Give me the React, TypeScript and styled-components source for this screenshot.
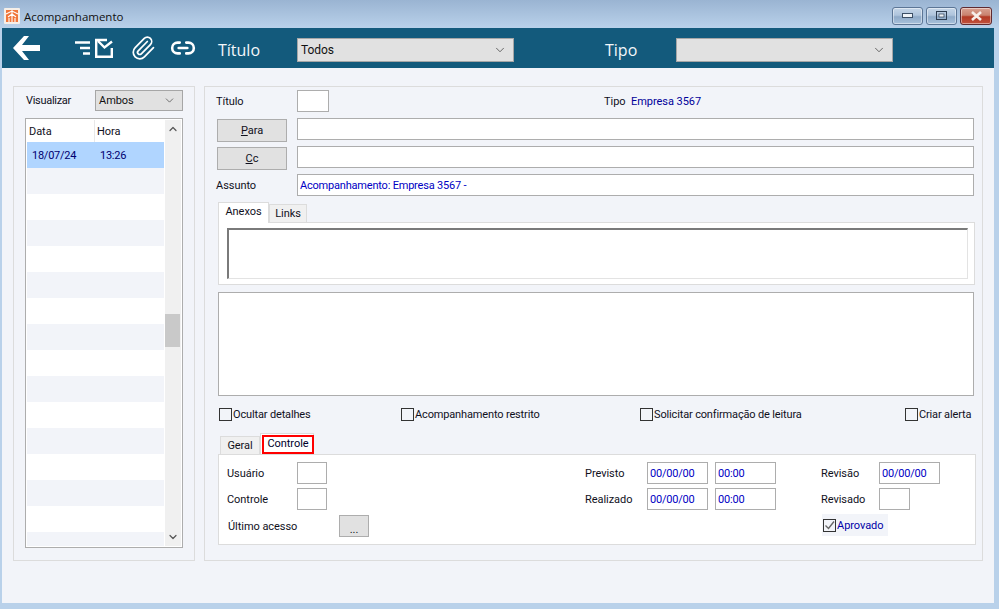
import React from "react";
import styled, { createGlobalStyle } from "styled-components";
import { Paperclip, Link2, ChevronDown, ChevronUp } from "lucide-react";

const Global = createGlobalStyle`
  html, body { margin: 0; padding: 0; background: #b9d1ea; }
  * { box-sizing: border-box; }
  body { font-family: "Roboto", "Liberation Sans", sans-serif; font-size: 11px; color: #10101c; letter-spacing: -0.05px; }
`;

const Window = styled.div`
  width: 999px; height: 609px; overflow: hidden;
  display: flex; flex-direction: column;
  background: #b9d1ea;
`;
const TitleBar = styled.div`
  height: 28px; flex: none; display: flex; align-items: center; padding: 4px 7px 0 4px;
  background: linear-gradient(#9ab4d2, #b9d1ea);
`;
const AppIcon = styled.svg`width: 16px; height: 16px; margin-right: 4px; flex: none;`;
const TitleText = styled.span`font-family: "Open Sans", sans-serif; font-size: 11.5px; letter-spacing: 0; color: #111; flex: 1;`;
const WinBtn = styled.div<{ $close?: boolean }>`
  width: ${p => (p.$close ? 32 : 31)}px; height: 18px; margin-left: 3px; display: flex; align-items: center; justify-content: center;
  border: 1px solid ${p => (p.$close ? "#5f2a30" : "#5c7696")}; border-radius: 3px;
  background: ${p => p.$close ? "linear-gradient(#d9a192 0%, #c9826f 45%, #b33a25 55%, #c0513d 100%)" : "linear-gradient(#c5d6e8 0%, #aec4dc 45%, #8faac8 55%, #a8c2dc 100%)"};
  box-shadow: inset 0 0 0 1px rgba(255,255,255,.45);
`;
const Client = styled.div`
  flex: 1; margin: 0 5px 6px 2px; background: #f2f4f9; display: flex; flex-direction: column; min-height: 0;
`;
const Toolbar = styled.div`
  height: 40px; flex: none; background: #135a7c; display: flex; align-items: center; color: #fff;
`;
const IconSlot = styled.div<{ $w: number; $l: number }>`
  width: ${p => p.$w}px; margin-left: ${p => p.$l}px; display: flex; align-items: center; justify-content: center; flex: none;
`;
const ToolLabel = styled.span<{ $w: number; $l: number }>`
  width: ${p => p.$w}px; margin: 3px 0 0 ${p => p.$l}px; flex: none;
  font-family: "Open Sans", sans-serif; font-size: 16px; letter-spacing: 0; color: #f4f7fa;
`;
const Select = styled.div<{ $w: number; $h: number; $size?: number; $drop?: number }>`
  width: ${p => p.$w}px; height: ${p => p.$h}px; flex: none; margin-top: ${p => p.$drop ?? 0}px;
  background: #e1e1e1; border: 1px solid #a6a6a6; color: #111;
  display: flex; align-items: center; justify-content: space-between;
  padding: 0 6px 0 3px; font-size: ${p => p.$size ?? 11}px;
`;
const Main = styled.div`
  flex: 1; min-height: 0; display: grid; grid-template-columns: 182px 779px; column-gap: 9px;
  padding: 18px 0 42px 11px;
`;
const Panel = styled.div`
  border: 1px solid #dcdcdc; min-height: 0; display: flex; flex-direction: column;
`;
const LeftPanel = styled(Panel)`padding: 3px 11px 12px 11px;`;
const RightPanel = styled(Panel)`padding: 3px 8px 0 11px;`;
const ViewRow = styled.div`display: flex; align-items: center; height: 21px; flex: none;`;
const ViewLabel = styled.span`width: 70px; flex: none; padding-left: 1px; color: #10101c; letter-spacing: -0.3px;`;
const ListBox = styled.div`
  margin-top: 7px; flex: 1; min-height: 0; border: 1px solid #adadad; background: #fff; padding: 1px;
  display: flex; gap: 1px;
`;
const ListCol = styled.div`flex: 1; min-width: 0; display: flex; flex-direction: column; overflow: hidden;`;
const ListHead = styled.div`height: 22px; flex: none; display: flex; align-items: center; background: #fff;`;
const HeadCell = styled.span<{ $w: number }>`
  width: ${p => p.$w}px; height: 100%; padding-left: 2px; display: flex; align-items: center; color: #10101c;
  &:first-child { border-right: 1px solid #e8e8e8; }
`;
const ListRow = styled.div<{ $kind: "sel" | "odd" | "even" }>`
  height: 26px; flex: none; display: flex; align-items: center; color: #000070; letter-spacing: -0.25px;
  background: ${p => (p.$kind === "sel" ? "#b0d5ff" : p.$kind === "odd" ? "#f2f4f9" : "#fff")};
`;
const Cell = styled.span<{ $w: number; $pl: number }>`width: ${p => p.$w}px; padding-left: ${p => p.$pl}px;`;
const ScrollBar = styled.div`
  width: 16px; flex: none; background: #f0f0f0; display: flex; flex-direction: column; align-items: center; color: #555;
`;
const Arrow = styled.div<{ $end?: boolean }>`
  height: 18px; flex: none; display: flex; align-items: center; justify-content: center; margin-top: ${p => (p.$end ? "auto" : "0")};
`;
const Thumb = styled.div`width: 15px; height: 33px; margin-top: 176px; background: #c9c9c9; flex: none; align-self: flex-start;`;

const Row = styled.div<{ $top?: number }>`
  display: flex; align-items: flex-start; flex: none; margin-top: ${p => p.$top ?? 0}px;
`;
const CenterRow = styled(Row)`align-items: center;`;
const LabelBox = styled.span<{ $w: number }>`width: ${p => p.$w}px; flex: none; color: #10101c;`;
const Input = styled.div<{ $w: number; $h?: number }>`
  width: ${p => p.$w}px; height: ${p => p.$h ?? 22}px; flex: none; background: #fff; border: 1px solid #adadad;
  display: flex; align-items: center; padding-left: 2px; color: #0000c4; white-space: nowrap; letter-spacing: -0.2px;
`;
const PushBtn = styled.div<{ $w: number }>`
  width: ${p => p.$w}px; height: 23px; flex: none; background: #e1e1e1; border: 1px solid #adadad;
  display: flex; align-items: center; justify-content: center; color: #10101c;
`;
const BtnCol = styled.div`width: 81px; flex: none; padding: 1px 0 0 1px;`;
const Value = styled.span`color: #00009a;`;
const TabStrip = styled.div<{ $l: number; $top: number }>`
  display: flex; align-items: flex-end; margin: ${p => p.$top}px 0 0 ${p => p.$l}px; flex: none; position: relative; z-index: 1;
`;
const Tab = styled.div<{ $active?: boolean; $w: number; $h: number }>`
  width: ${p => p.$w}px; height: ${p => p.$h}px; flex: none; display: flex; align-items: center; justify-content: center;
  border: 1px solid #dcdcdc; border-bottom: none; color: #10101c;
  background: ${p => (p.$active ? "#fff" : "#f0f0f0")};
  margin-bottom: ${p => (p.$active ? "-1px" : "0")};
  padding-bottom: ${p => (p.$active ? 4 : 0)}px;
`;
const RedTab = styled.div`
  width: 54px; height: 21px; flex: none; background: #fff; border: 1px solid #dcdcdc; border-bottom: none; padding: 1px 0 0 1px;
`;
const RedBox = styled.div`
  width: 52px; height: 19px; border: 2px solid #f00; background: #fff; display: flex; align-items: center; justify-content: center; padding-bottom: 3px; color: #00002a;
`;
const AttachPanel = styled.div`
  margin-left: 2px; width: 757px; height: 63px; flex: none; background: #fff; border: 1px solid #dcdcdc; padding: 5px 6px 5px 8px;
`;
const AttachInner = styled.div`
  height: 100%; border: 1px solid #e3e3e3; border-top: 2px solid #7a7a7a; border-left: 2px solid #7a7a7a; background: #fff;
`;
const Memo = styled.div`
  margin: 7px 0 0 2px; width: 756px; height: 104px; flex: none; background: #fff; border: 1px solid #adadad;
`;
const CheckRow = styled.div`
  margin: 12px 0 0 3px; width: 754px; height: 13px; flex: none; display: grid; grid-template-columns: 182px 239px 265px 1fr; align-items: center; letter-spacing: -0.15px;
`;
const CheckLabel = styled.label<{ $shaded?: boolean }>`
  display: flex; align-items: center; white-space: nowrap; color: ${p => (p.$shaded ? "#0000a8" : "#10101c")};
  ${p => p.$shaded ? "background:#f2f4f9; width:66px; height:22px; padding-left:1px; margin-left:1px;" : ""}
`;
const Box = styled.span`
  width: 13px; height: 13px; flex: none; border: 1px solid #333; background: transparent; margin-right: 1px; display: flex;
`;
const CtrlPanel = styled.div`
  margin-left: 2px; width: 758px; height: 91px; flex: none; background: #fff; border: 1px solid #dcdcdc;
  padding: 7px 0 0 8px;
  display: grid; grid-template-columns: 70px 288px 62px 68px 106px 58px 1fr; grid-auto-rows: 22px; row-gap: 4px; align-items: center;
`;
const AccessCell = styled.div`grid-column: 1 / span 2; display: flex; align-items: center; padding-left: 1px; margin-top: 2px;`;
const ApproveCell = styled.div`grid-column: 6 / span 2;`;
const Gap = styled.div<{ $span: number }>`grid-column: span ${p => p.$span};`;
const DotBtn = styled(PushBtn)`height: 22px; align-items: flex-end;`;
const CellLabel = styled.span`color: #10101c;`;

const rows = Array.from({ length: 15 }, (_, i) => i);

function MailListIcon() {
  return (
    <svg width="38" height="22" viewBox="0 0 38 22" fill="none" stroke="#fff" strokeWidth="2.4">
      <path d="M0 5.5h15M5 11h10M8 16.5h7" />
      <path d="M32 3H21.2v16.8h15.6V11" />
      <path d="M23 4l6.5 6.5L37 4.5" />
    </svg>
  );
}

export default function App() {
  return (
    <>
      <Global />
      <Window>
        <TitleBar>
          <AppIcon viewBox="0 0 16 16">
            <rect width="16" height="16" rx="1" fill="#f6efe8" />
            <rect x="2" y="2" width="12" height="12" fill="#f0763a" />
            <path d="M8 2v12M2 6l6-3 6 3M4 9l4-3 4 3M5 14v-4M11 14v-4" stroke="#fff" strokeWidth="1.1" fill="none" />
          </AppIcon>
          <TitleText>Acompanhamento</TitleText>
          <WinBtn>
            <svg width="11" height="6"><rect x=".5" y=".5" width="10" height="4" fill="#eef3f8" stroke="#3c4f66" /></svg>
          </WinBtn>
          <WinBtn>
            <svg width="11" height="10"><rect x=".5" y=".5" width="10" height="8" fill="none" stroke="#2c3c50" /><rect x="3" y="3" width="5" height="3" fill="#eef3f8" stroke="#2c3c50" strokeWidth=".7" /></svg>
          </WinBtn>
          <WinBtn $close>
            <svg width="13" height="10" viewBox="0 0 13 10"><path d="M2 1l9 8M11 1l-9 8" stroke="#f7eeea" strokeWidth="2.6" /></svg>
          </WinBtn>
        </TitleBar>
        <Client>
          <Toolbar>
            <IconSlot $w={28} $l={10}>
              <svg width="28" height="24" viewBox="0 0 28 24" fill="#fff"><path d="M12 0h5l-7 9h18v6H10l7 9h-5L1 12z" /></svg>
            </IconSlot>
            <IconSlot $w={38} $l={35}><MailListIcon /></IconSlot>
            <IconSlot $w={26} $l={17}><Paperclip size={30} color="#fff" strokeWidth={1.6} /></IconSlot>
            <IconSlot $w={26} $l={14}><Link2 size={28} color="#fff" strokeWidth={2.4} /></IconSlot>
            <ToolLabel $w={79} $l={22}>Título</ToolLabel>
            <Select $w={217} $h={24} $size={12} $drop={4}>Todos<ChevronDown size={14} strokeWidth={1.2} color="#333" /></Select>
            <ToolLabel $w={71} $l={91}>Tipo</ToolLabel>
            <Select $w={217} $h={24} $drop={4}><span /><ChevronDown size={14} strokeWidth={1.2} color="#333" /></Select>
          </Toolbar>
          <Main>
            <LeftPanel>
              <ViewRow>
                <ViewLabel>Visualizar</ViewLabel>
                <Select $w={88} $h={21}>Ambos<ChevronDown size={13} strokeWidth={1.2} color="#333" /></Select>
              </ViewRow>
              <ListBox>
                <ListCol>
                  <ListHead>
                    <HeadCell $w={68}>Data</HeadCell>
                    <HeadCell $w={69}>Hora</HeadCell>
                  </ListHead>
                  <ListRow $kind="sel">
                    <Cell $w={68} $pl={5}>18/07/24</Cell>
                    <Cell $w={69} $pl={5}>13:26</Cell>
                  </ListRow>
                  {rows.map(i => <ListRow key={i} $kind={i % 2 === 0 ? "odd" : "even"} />)}
                </ListCol>
                <ScrollBar>
                  <Arrow><ChevronUp size={12} strokeWidth={2.4} /></Arrow>
                  <Thumb />
                  <Arrow $end><ChevronDown size={12} strokeWidth={2.4} /></Arrow>
                </ScrollBar>
              </ListBox>
            </LeftPanel>
            <RightPanel>
              <CenterRow>
                <LabelBox $w={81}>Título</LabelBox>
                <Input $w={32} />
                <LabelBox $w={275} />
                <LabelBox $w={27}>Tipo</LabelBox>
                <Value>Empresa 3567</Value>
              </CenterRow>
              <Row $top={6}>
                <BtnCol><PushBtn $w={70}><span><u>P</u>ara</span></PushBtn></BtnCol>
                <Input $w={677} />
              </Row>
              <Row $top={4}>
                <BtnCol><PushBtn $w={70}><span><u>C</u>c</span></PushBtn></BtnCol>
                <Input $w={677} />
              </Row>
              <CenterRow $top={4}>
                <LabelBox $w={81}>Assunto</LabelBox>
                <Input $w={677}>Acompanhamento: Empresa 3567 -</Input>
              </CenterRow>
              <TabStrip $l={2} $top={6}>
                <Tab $active $w={51} $h={21}>Anexos</Tab>
                <Tab $w={38} $h={18}>Links</Tab>
              </TabStrip>
              <AttachPanel><AttachInner /></AttachPanel>
              <Memo />
              <CheckRow>
                <CheckLabel><Box />Ocultar detalhes</CheckLabel>
                <CheckLabel><Box />Acompanhamento restrito</CheckLabel>
                <CheckLabel><Box />Solicitar confirmação de leitura</CheckLabel>
                <CheckLabel><Box />Criar alerta</CheckLabel>
              </CheckRow>
              <TabStrip $l={4} $top={12}>
                <Tab $w={40} $h={18}>Geral</Tab>
                <RedTab><RedBox>Controle</RedBox></RedTab>
              </TabStrip>
              <CtrlPanel>
                <CellLabel>Usuário</CellLabel>
                <Input $w={30} />
                <CellLabel>Previsto</CellLabel>
                <Input $w={61}>00/00/00</Input>
                <Input $w={61}>00:00</Input>
                <CellLabel>Revisão</CellLabel>
                <Input $w={61}>00/00/00</Input>

                <CellLabel>Controle</CellLabel>
                <Input $w={30} />
                <CellLabel>Realizado</CellLabel>
                <Input $w={61}>00/00/00</Input>
                <Input $w={61}>00:00</Input>
                <CellLabel>Revisado</CellLabel>
                <Input $w={31} />

                <AccessCell>
                  <LabelBox $w={111}>Último acesso</LabelBox>
                  <DotBtn $w={30}>...</DotBtn>
                </AccessCell>
                <Gap $span={3} />
                <ApproveCell>
                  <CheckLabel $shaded>
                    <Box>
                      <svg width="11" height="11" viewBox="0 0 11 11" fill="none" stroke="#666" strokeWidth="1.4"><path d="M1.5 5.5l3 3 5.5-7" /></svg>
                    </Box>
                    Aprovado
                  </CheckLabel>
                </ApproveCell>
              </CtrlPanel>
            </RightPanel>
          </Main>
        </Client>
      </Window>
    </>
  );
}
